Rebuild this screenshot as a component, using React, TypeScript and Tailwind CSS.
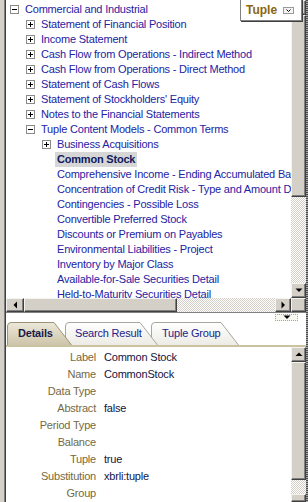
import React from "react";

type Node = { lvl: number; icon?: "plus" | "minus"; text: string; selected?: boolean };

const tree: Node[] = [
  { lvl: 0, icon: "minus", text: "Commercial and Industrial" },
  { lvl: 1, icon: "plus", text: "Statement of Financial Position" },
  { lvl: 1, icon: "plus", text: "Income Statement" },
  { lvl: 1, icon: "plus", text: "Cash Flow from Operations - Indirect Method" },
  { lvl: 1, icon: "plus", text: "Cash Flow from Operations - Direct Method" },
  { lvl: 1, icon: "plus", text: "Statement of Cash Flows" },
  { lvl: 1, icon: "plus", text: "Statement of Stockholders' Equity" },
  { lvl: 1, icon: "plus", text: "Notes to the Financial Statements" },
  { lvl: 1, icon: "minus", text: "Tuple Content Models - Common Terms" },
  { lvl: 2, icon: "plus", text: "Business Acquisitions" },
  { lvl: 2, text: "Common Stock", selected: true },
  { lvl: 2, text: "Comprehensive Income - Ending Accumulated Balance" },
  { lvl: 2, text: "Concentration of Credit Risk - Type and Amount Details" },
  { lvl: 2, text: "Contingencies - Possible Loss" },
  { lvl: 2, text: "Convertible Preferred Stock" },
  { lvl: 2, text: "Discounts or Premium on Payables" },
  { lvl: 2, text: "Environmental Liabilities - Project" },
  { lvl: 2, text: "Inventory by Major Class" },
  { lvl: 2, text: "Available-for-Sale Securities Detail" },
  { lvl: 2, text: "Held-to-Maturity Securities Detail" },
];

const details: [string, string][] = [
  ["Label", "Common Stock"],
  ["Name", "CommonStock"],
  ["Data Type", ""],
  ["Abstract", "false"],
  ["Period Type", ""],
  ["Balance", ""],
  ["Tuple", "true"],
  ["Substitution Group", "xbrli:tuple"],
];

const checker =
  "bg-[repeating-conic-gradient(#d4d0c8_0_25%,#ffffff_0_50%)] bg-[length:2px_2px]";
const raised =
  "bg-[#d4d0c8] border border-t-[#f4f3ee] border-l-[#f4f3ee] border-r-[#404040] border-b-[#404040] shadow-[inset_-1px_-1px_0_#808080]";

function Expander({ kind }: { kind: "plus" | "minus" }) {
  return (
    <svg width="9" height="9" viewBox="0 0 9 9" className="shrink-0">
      <rect x="0.5" y="0.5" width="8" height="8" fill="#fff" stroke="#8a8a8a" />
      <line x1="2" y1="4.5" x2="7" y2="4.5" stroke="#000" />
      {kind === "plus" && <line x1="4.5" y1="2" x2="4.5" y2="7" stroke="#000" />}
    </svg>
  );
}

function Arrow({ dir }: { dir: "up" | "down" | "left" | "right" }) {
  const pts = {
    up: "0.5,4 7.5,4 4,0.5",
    down: "0.5,0.5 7.5,0.5 4,4",
    left: "4,0.5 4,7.5 0.5,4",
    right: "0.5,0.5 0.5,7.5 4,4",
  }[dir];
  const vert = dir === "up" || dir === "down";
  return (
    <svg width={vert ? 8 : 5} height={vert ? 5 : 8} viewBox={vert ? "0 0 8 5" : "0 0 5 8"}>
      <polygon points={pts} fill="#000" />
    </svg>
  );
}

function Tab({
  id,
  label,
  w,
  active,
  className,
}: {
  id: string;
  label: string;
  w: number;
  active?: boolean;
  className: string;
}) {
  const h = 23;
  return (
    <div className={`relative h-[23px] flex items-center ${className}`}>
      <svg width={w} height={h} className="absolute left-0 top-0">
        <defs>
          <linearGradient id={id} x1="0" y1="0" x2="0" y2="1">
            <stop offset="0" stopColor={active ? "#ece8da" : "#ffffff"} />
            <stop offset="1" stopColor={active ? "#cdc5a9" : "#ecebe5"} />
          </linearGradient>
        </defs>
        <path
          d={`M0.5,${h} L0.5,4 Q0.5,0.5 4,0.5 L${w - 18},0.5 L${w - 0.5},${h}`}
          fill={`url(#${id})`}
          stroke={active ? "#9c9474" : "#a7a69f"}
        />
      </svg>
      <span
        className={`relative ${active ? "font-bold text-[#1a1a4a]" : "text-[#22228a]"}`}
      >
        {label}
      </span>
    </div>
  );
}

export default function App() {
  return (
    <div className="w-[308px] h-[502px] flex overflow-hidden bg-white text-[11px] leading-[15px] tracking-[-0.2px] font-['Liberation_Sans',Arial,sans-serif]">
      {/* left frame */}
      <div className="w-[4px] shrink-0 bg-[#d4d0c8]" />
      <div className="w-[2px] shrink-0 bg-[#808080] border-r border-[#404040]" />

      <div className="w-[300px] flex flex-col relative">
        {/* top: tree */}
        <div className="h-[298px] flex">
          <div className="w-[285px] overflow-hidden pt-[2px]">
            {tree.map((n, i) => (
              <div
                key={i}
                className="h-[15px] flex items-center whitespace-nowrap"
                style={{ paddingLeft: 4 + n.lvl * 16 }}
              >
                {n.icon ? <Expander kind={n.icon} /> : <span className="w-[9px] shrink-0" />}
                {n.selected ? (
                  <span className="ml-[4px] px-[2px] bg-[#d6d6d6] font-bold text-[#0f1a5c]">
                    {n.text}
                  </span>
                ) : (
                  <span className="ml-[6px] text-[#2323a3]">{n.text}</span>
                )}
              </div>
            ))}
          </div>
          <div className="w-[15px] flex flex-col">
            <div className={`h-[15px] flex items-center justify-center ${raised}`}>
              <Arrow dir="up" />
            </div>
            <div className={`h-[182px] ${raised}`} />
            <div className={`flex-1 ${checker}`} />
            <div className={`h-[15px] flex items-center justify-center ${raised}`}>
              <Arrow dir="down" />
            </div>
          </div>
        </div>
        <div className="h-[15px] flex">
          <div className={`w-[18px] flex items-center justify-center ${raised}`}>
            <Arrow dir="left" />
          </div>
          <div className={`w-[153px] ${raised}`} />
          <div className={`flex-1 ${checker}`} />
          <div className={`w-[16px] flex items-center justify-center ${raised}`}>
            <Arrow dir="right" />
          </div>
          <div className={`w-[15px] ${raised}`} />
        </div>

        {/* splitter */}
        <div className="h-[9px] border-t border-[#808080] flex justify-end items-end pr-[8px]">
          <div className="w-[23px] h-[7px] border border-dotted border-[#9aa6b8] bg-[#f6f8f0] flex items-center justify-center">
            <Arrow dir="down" />
          </div>
        </div>

        {/* tabs */}
        <div className="h-[28px] flex items-end pl-[1px] border-b-2 border-[#cbc2a2]">
          <Tab id="tabDetails" label="Details" w={65} active className="w-[65px] pl-[11px] z-30" />
          <Tab id="tabSearch" label="Search Result" w={93} className="w-[93px] -ml-[7px] pl-[10px] z-20" />
          <Tab id="tabTuple" label="Tuple Group" w={88} className="w-[88px] -ml-[7px] pl-[11px] z-10" />
        </div>

        {/* details */}
        <div className="flex-1 flex">
          <div className="w-[285px] pt-[2px] leading-[17px]">
            {details.map(([k, v]) => (
              <div key={k} className="grid grid-cols-[90px_1fr] gap-x-[8px]">
                <div className="w-[60px] ml-auto text-right text-[#75693f]">{k}</div>
                <div className="text-[#141440]">{v}</div>
              </div>
            ))}
          </div>
          <div className="w-[15px] flex flex-col">
            <div className={`h-[15px] shrink-0 flex items-center justify-center ${raised}`}>
              <Arrow dir="up" />
            </div>
            <div className={`h-[118px] shrink-0 ${raised}`} />
            <div className={`h-[14px] shrink-0 ${checker}`} />
            <div className={`flex-1 ${raised}`} />
          </div>
        </div>

        {/* floating group selector */}
        <div className="absolute left-[234px] top-[-1px] w-[62px] h-[22px] bg-white border border-[#808080] shadow-[1px_1px_0_#404040] flex items-center pl-[5px]">
          <span className="font-bold text-[12px] text-[#8b6510] tracking-normal">Tuple</span>
          <svg width="11" height="7" viewBox="0 0 11 7" className="ml-[6px]">
            <rect x="0.5" y="0.5" width="10" height="6" fill="#f4f4f4" stroke="#9a9a9a" />
            <polyline points="3.5,2.5 5.5,4.5 7.5,2.5" fill="none" stroke="#000" />
          </svg>
        </div>
      </div>

      {/* right frame */}
      <div className="w-[2px] shrink-0 bg-[repeating-linear-gradient(#4a4a4a_0_1px,#a8a8a8_1px_2px)]" />
    </div>
  );
}
